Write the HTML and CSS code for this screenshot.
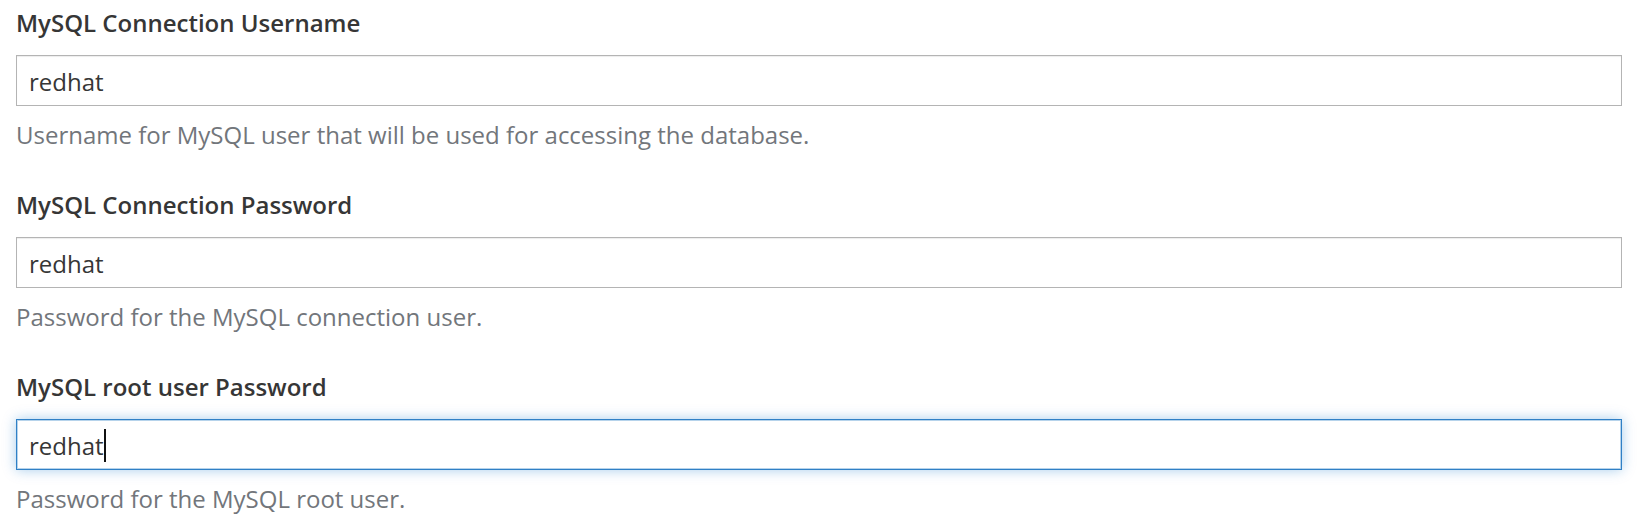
FILE: index.html
```html
<!DOCTYPE html>
<html lang="en">
<head>
<meta charset="utf-8">
<title>MySQL settings</title>
<link rel="stylesheet" href="styles.css">
</head>
<body>
<form class="form">
  <div class="group">
    <label class="label">MySQL Connection Username</label>
    <div class="input">redhat</div>
    <p class="help">Username for MySQL user that will be used for accessing the database.</p>
  </div>
  <div class="group">
    <label class="label">MySQL Connection Password</label>
    <div class="input">redhat</div>
    <p class="help">Password for the MySQL connection user.</p>
  </div>
  <div class="group">
    <label class="label">MySQL root user Password</label>
    <div class="input focused">redhat<span class="caret"></span></div>
    <p class="help">Password for the MySQL root user.</p>
  </div>
</form>
</body>
</html>
```

FILE: styles.css
```css
html, body {
  margin: 0;
  padding: 0;
  background: #ffffff;
}

.form {
  font-family: "Open Sans", "Noto Sans", sans-serif;
  font-size: 24px;
  line-height: 32px;
  color: #363636;
  padding: 7px 28px 0 16px;
  margin: 0;
}

.group {
  display: flex;
  flex-direction: column;
  margin-bottom: 38px;
}

.label {
  display: block;
  font-weight: 600;
  color: #363636;
  margin: 0 0 16px 0;
}

.input {
  height: 32px;
  padding: 10px 12px 7px 12px;
  border: 1px solid #b4b4b4;
  box-shadow: inset 0 1px 1px rgba(3, 3, 3, 0.075);
  color: #363636;
  background: #ffffff;
  display: flex;
  align-items: flex-start;
}

.input.focused {
  border: 1px solid #2f80c6;
  box-shadow: inset 0 0 0 1px rgba(47, 128, 198, 0.35), 0 0 12px rgba(0, 112, 200, 0.35);
}

.caret {
  display: inline-block;
  width: 2px;
  height: 33px;
  margin-top: -1px;
  background: #111111;
}

.help {
  margin: 13px 0 0 0;
  color: #72767b;
}
```
